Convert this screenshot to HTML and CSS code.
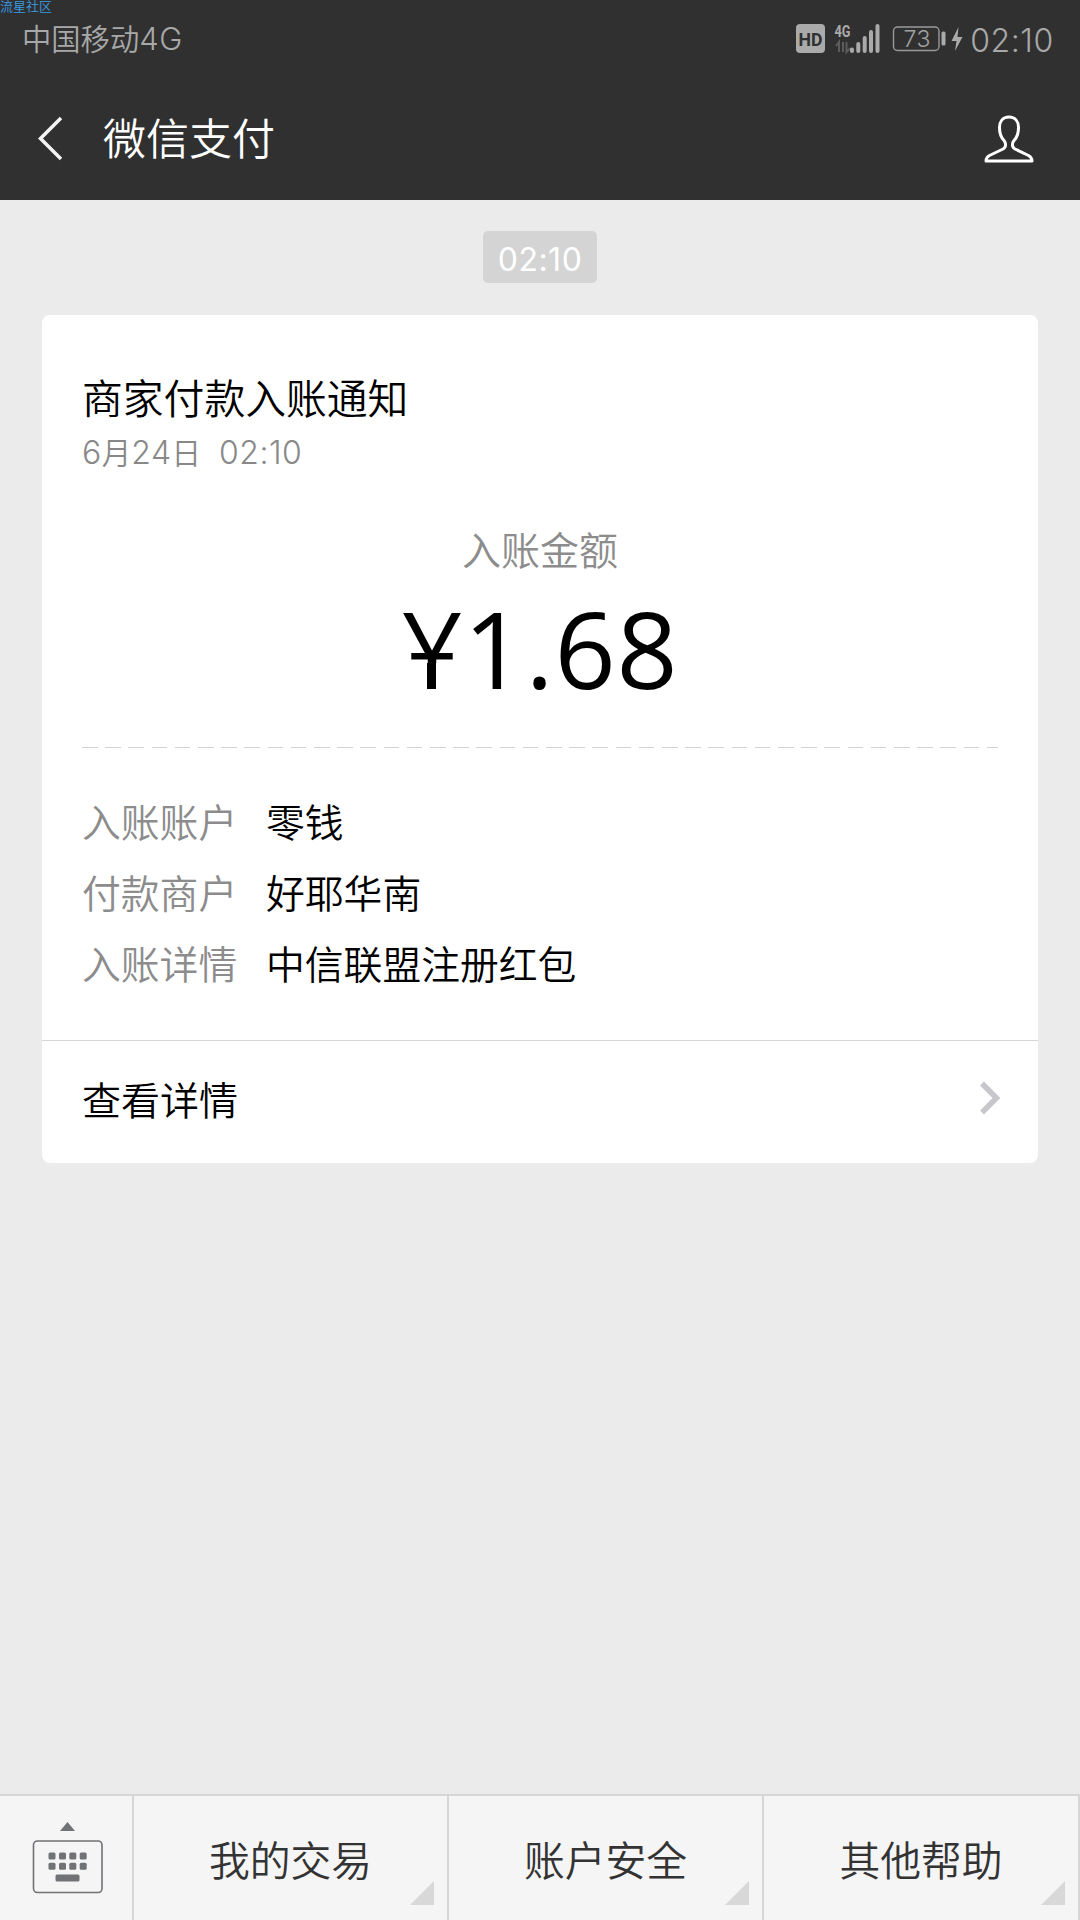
FILE: index.html
```html
<!DOCTYPE html>
<html lang="zh-CN">
<head>
<meta charset="utf-8">
<title>微信支付</title>
<link rel="stylesheet" href="styles.css">
</head>
<body>
<div class="screen">
  <span class="watermark">流星社区</span>
  <header class="header">
    <div class="status">
      <span class="carrier">中国移动<span class="num">4G</span></span>
      <svg class="status-icons" width="172" height="40" viewBox="0 0 172 40">
        <rect x="0" y="4" width="29" height="29" rx="4" fill="#aaa"/>
        <text x="14.5" y="25.500" class="hd" textLength="24" lengthAdjust="spacingAndGlyphs">HD</text>
        <text x="38.500" y="17" class="net" textLength="16" lengthAdjust="spacingAndGlyphs">4G</text>
        <path d="M40 26l3-4v10M50.500 22v10l4-4M47 22v10" fill="none" stroke="#5c5c5c" stroke-width="2"/>
        <g stroke="#aaa" stroke-width="4" stroke-linecap="round">
          <path d="M56 29.500v1.500M62.300 24v7M68.700 18v13M75 12v19M81.500 6v25"/>
        </g>
        <rect x="97.500" y="7" width="45.500" height="23.500" rx="4" fill="none" stroke="#999" stroke-width="1.400"/>
        <text x="121" y="26.500" class="level" textLength="27">73</text>
        <rect x="145.500" y="11.500" width="4" height="14" rx="1.500" fill="#aaa"/>
        <path d="M162.500 7L155.500 21h5l-1.500 10L166.500 17h-5z" fill="#aaa"/>
      </svg>
      <span class="clock num">02:10</span>
    </div>
    <div class="nav">
      <svg class="back" width="26" height="46" viewBox="0 0 26 46"><path d="M24 2L3.500 22.500 24 43" fill="none" stroke="#f4f4f4" stroke-width="3.500"/></svg>
      <h1 class="title">微信支付</h1>
      <svg class="person" width="50" height="50" viewBox="0 0 50 50"><path d="M25 3C18.500 3 15.500 8 15.500 13.500C15.500 20 17 23.500 20 26.500C22 29 22.500 33 19 35L5.500 41.500Q2 43.500 2 47H48Q48 43.500 44.500 41.500L31 35C27.500 33 28 29 30 26.500C33 23.500 34.500 20 34.500 13.500C34.500 8 31.500 3 25 3Z" fill="none" stroke="#fff" stroke-width="3" stroke-linejoin="round"/></svg>
    </div>
  </header>
  <main class="chat">
    <time class="stamp num">02:10</time>
    <article class="card">
      <div class="card-body">
        <h2 class="card-title">商家付款入账通知</h2>
        <p class="date"><span class="num">6</span>月<span class="num">24</span>日<span class="date-time num">02:10</span></p>
        <p class="amount-label">入账金额</p>
        <p class="amount"><span class="yen">¥</span>1.68</p>
        <div class="dashes"></div>
        <dl class="details">
          <dt>入账账户</dt><dd>零钱</dd>
          <dt>付款商户</dt><dd>好耶华南</dd>
          <dt>入账详情</dt><dd>中信联盟注册红包</dd>
        </dl>
      </div>
      <a class="more">
        <span>查看详情</span>
        <svg width="23" height="34" viewBox="0 0 23 34"><path d="M3 2.500L17.500 17 3 31.500" fill="none" stroke="#c7c7cb" stroke-width="5.500"/></svg>
      </a>
    </article>
  </main>
  <footer class="menu">
    <div class="keyboard">
      <svg width="71" height="74" viewBox="0 0 71 74">
        <path d="M28 10L35.500 1l7.500 9z" fill="#717276"/>
        <rect x="1.500" y="20" width="68.500" height="51.500" rx="4" fill="none" stroke="#717276" stroke-width="1.600"/>
        <g fill="#717276">
          <rect x="16.500" y="31.500" width="7" height="7" rx="1.500"/><rect x="27" y="31.500" width="7" height="7" rx="1.500"/><rect x="37.300" y="31.500" width="7" height="7" rx="1.500"/><rect x="47.700" y="31.500" width="7" height="7" rx="1.500"/>
          <rect x="16.500" y="41.800" width="7" height="7" rx="1.500"/><rect x="27" y="41.800" width="7" height="7" rx="1.500"/><rect x="37.300" y="41.800" width="7" height="7" rx="1.500"/><rect x="47.700" y="41.800" width="7" height="7" rx="1.500"/>
          <rect x="23.500" y="53.500" width="24" height="7" rx="1.500"/>
        </g>
      </svg>
    </div>
    <div class="tab">我的交易</div>
    <div class="tab">账户安全</div>
    <div class="tab">其他帮助</div>
  </footer>
</div>
</body>
</html>
```
FILE: styles.css
```css
* { box-sizing: border-box; margin: 0; padding: 0; }
body {
  font-family: "Liberation Sans", "Noto Sans CJK SC", sans-serif;
  font-weight: 350;
  color: #000;
}
.num { font-family: Inter, "Open Sans", sans-serif; font-weight: 300; letter-spacing: 0.500px; }
.screen {
  position: relative;
  width: 1080px;
  height: 1920px;
  display: flex;
  flex-direction: column;
  background: #ebebeb;
  overflow: hidden;
}
.watermark {
  position: absolute;
  left: 0;
  top: 0;
  font-size: 13px;
  line-height: 13px;
  color: #3a9ce4;
}
.header { height: 200px; background: #303030; }
.status {
  height: 80px;
  padding: 0 26px 0 22px;
  display: flex;
  align-items: center;
  color: #a8a8a8;
}
.carrier { flex: 1; font-size: 29.300px; line-height: 42px; }
.carrier .num { font-size: 31px; line-height: 1; }
.status-icons { margin-right: 2px; }
.hd { font: bold 18px Roboto, sans-serif; fill: #303030; text-anchor: middle; }
.net { font: bold 17px Roboto, sans-serif; fill: #aaa; }
.level { font: 300 23px Inter, sans-serif; fill: #a0a0a0; text-anchor: middle; }
.clock { width: 84px; padding-top: 2px; font-size: 32px; line-height: 40px; text-align: center; }
.nav {
  height: 120px;
  padding: 0 46px 2px 37px;
  display: flex;
  align-items: center;
  color: #fff;
}
.title {
  flex: 1;
  margin-left: 40px;
  padding-top: 2px;
  font-size: 43px;
  font-weight: 350;
  line-height: 60px;
}
.chat {
  flex: 1;
  padding: 31px 42px 0;
  display: flex;
  flex-direction: column;
  align-items: center;
}
.stamp {
  width: 114px;
  height: 52px;
  border-radius: 5px;
  background: #d4d4d4;
  color: #fff;
  font-size: 32px;
  font-weight: 400;
  line-height: 57px;
  text-align: center;
}
.card {
  width: 996px;
  height: 848px;
  margin-top: 32px;
  border-radius: 8px;
  background: #fff;
}
.card-body { height: 725px; padding: 55px 40px 0; }
.card-title { font-size: 40.800px; font-weight: 350; line-height: 60px; }
.date {
  height: 42px;
  margin-top: 1px;
  font-size: 29.500px;
  line-height: 45px;
  color: #888;
}
.date .num { font-size: 32px; line-height: 1; }
.date .date-time { margin-left: 18px; }
.amount-label {
  margin-top: 51px;
  font-size: 39px;
  line-height: 56px;
  color: #8c8c8c;
  text-align: center;
}
.amount {
  margin-top: 8px;
  font-family: "Open Sans", "Noto Sans", sans-serif;
  font-size: 107px;
  font-weight: 400;
  line-height: 120px;
  letter-spacing: 0.800px;
  text-align: center;
}
/* Leaves a single crossbar on the currency sign */
.yen { position: relative; display: inline-block; }
.yen::after {
  content: "";
  position: absolute;
  left: 0;
  right: 0;
  top: 75px;
  height: 26px;
  background: linear-gradient(90deg, #fff 25px, #000 25px 34px, #fff 34px);
}
.dashes {
  width: 916px;
  height: 1px;
  margin-top: 39px;
  background: repeating-linear-gradient(90deg, #d3d3d3 0 15.500px, transparent 15.500px 23.200px);
}
.details {
  margin-top: 40px;
  display: grid;
  grid-template-columns: 184px 1fr;
  font-size: 38.800px;
  line-height: 71px;
}
.details dt { color: #8c8c8c; }
.more {
  height: 123px;
  padding: 0 36px 8px 40px;
  border-top: 1px solid #d6d8d8;
  display: flex;
  align-items: center;
  justify-content: space-between;
  font-size: 39px;
}
.menu {
  height: 126px;
  border-top: 2px solid #d6d6d6;
  background: #f5f5f5;
  display: grid;
  grid-template-columns: 134px 315px 315px 316px;
}
.keyboard {
  border-right: 2px solid #d6d6d6;
  padding: 25px 0 0 32px;
}
.tab {
  position: relative;
  border-right: 2px solid #d6d6d6;
  display: flex;
  align-items: center;
  justify-content: center;
  font-size: 40.800px;
  color: #333;
}
.tab::after {
  content: "";
  position: absolute;
  right: 13px;
  bottom: 15px;
  width: 24px;
  height: 24px;
  background: #d8d8d8;
  clip-path: polygon(100% 0, 100% 100%, 0 100%);
}
```
